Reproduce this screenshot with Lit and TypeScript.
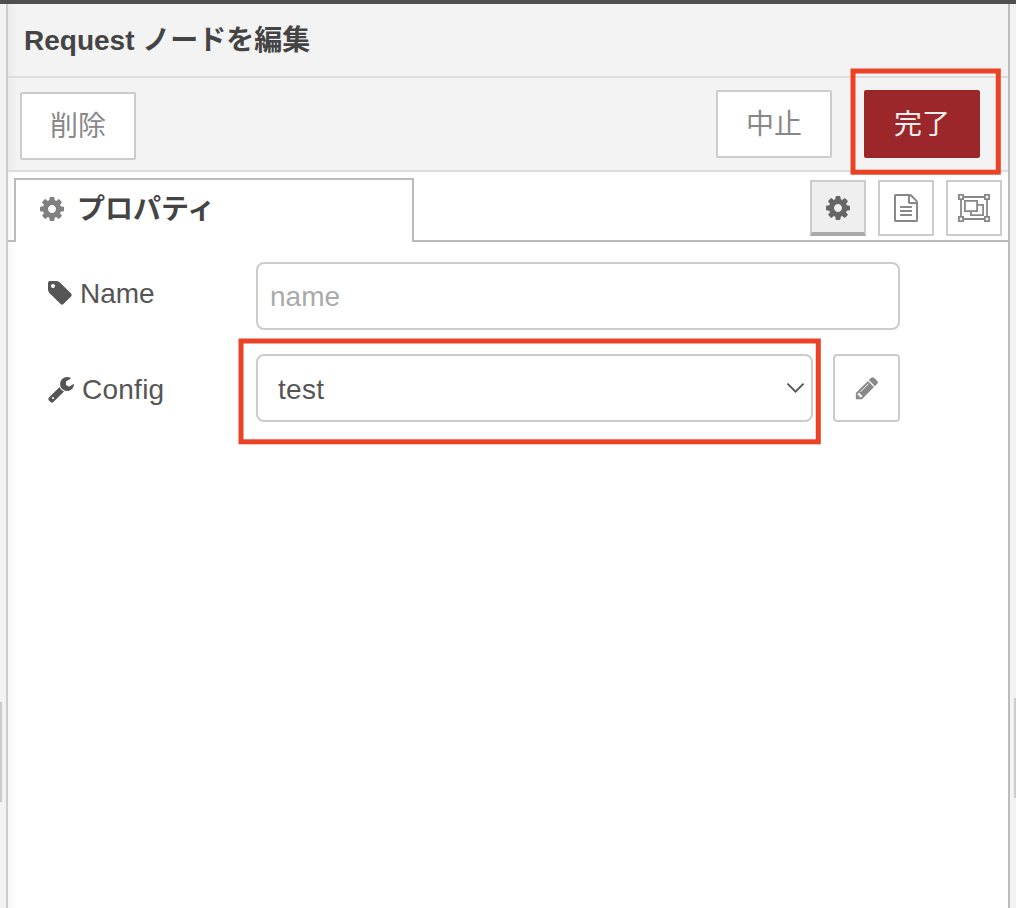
import { LitElement, html, css, svg } from "lit";
import { customElement, property } from "lit/decorators.js";

const ICONS: Record<string, string> = {
  cog: "M1152 896q0-106-75-181t-181-75-181 75-75 181 75 181 181 75 181-75 75-181zm512-109v222q0 12-8 23t-20 13l-185 28q-19 54-39 91 35 50 107 138 10 12 10 25t-9 23q-27 37-99 108t-94 71q-12 0-26-9l-138-108q-44 23-91 38-16 136-29 186-7 28-36 28h-222q-14 0-24.5-8.5t-11.5-21.5l-28-184q-49-16-90-37l-141 107q-10 9-25 9-14 0-25-11-126-114-165-168-7-10-7-23 0-12 8-23 15-21 51-66.5t54-70.5q-27-50-41-99l-183-27q-13-2-21-12.5t-8-23.5v-222q0-12 8-23t19-13l186-28q14-46 39-92-40-57-107-138-10-12-10-24 0-10 9-23 26-36 98.5-107.5t94.5-71.5q13 0 26 10l138 107q44-23 91-38 16-136 29-186 7-28 36-28h222q14 0 24.5 8.5t11.5 21.5l28 184q49 16 90 37l142-107q9-9 24-9 13 0 25 10 129 119 165 170 7 8 7 22 0 12-8 23-15 21-51 66.5t-54 70.5q26 50 41 98l183 28q13 2 21 12.5t8 23.5z",
  tag: "M576 448q0-53-37.5-90.5t-90.5-37.5-90.5 37.5-37.5 90.5 37.5 90.5 90.5 37.5 90.5-37.5 37.5-90.5zm1067 576q0 53-37 90l-491 492q-39 37-91 37-53 0-90-37l-715-716q-38-37-64.5-101t-26.5-117v-416q0-52 38-90t90-38h416q53 0 117 26.5t102 64.5l715 714q37 39 37 91z",
  wrench: "M448 1472q0-26-19-45t-45-19-45 19-19 45 19 45 45 19 45-19 19-45zm644-420l-682 682q-37 37-90 37-52 0-91-37l-106-108q-38-36-38-90 0-53 38-91l681-681q39 98 114.5 173.5t173.5 114.5zm634-435q0 39-23 106-47 134-164.5 217.5t-258.5 83.5q-185 0-316.5-131.5t-131.5-316.5 131.5-316.5 316.5-131.5q58 0 121.5 16.5t107.5 46.5q16 11 16 28t-16 28l-293 169v224l193 107q5-3 79-48.5t135.5-81 70.5-35.5q15 0 23.5 10t8.5 25z",
  pencil: "M491 1536l91-91-235-235-91 91v107h128v128h107zm523-928q0-22-22-22-10 0-17 7l-542 542q-7 7-7 17 0 22 22 22 10 0 17-7l542-542q7-7 7-17zm-54-192l416 416-832 832h-416v-416zm683 96q0 53-37 90l-166 166-416-416 166-165q36-38 90-38 53 0 91 38l235 234q37 39 37 91z",
  file: "M1596 380q28 28 48 76t20 88v1152q0 40-28 68t-68 28h-1344q-40 0-68-28t-28-68v-1600q0-40 28-68t68-28h896q40 0 88 20t76 48zm-444-244v376h376q-10-29-22-41l-313-313q-12-12-41-22zm384 1528v-1024h-416q-40 0-68-28t-28-68v-416h-768v1536h1280zm-1024-864q0-14 9-23t23-9h704q14 0 23 9t9 23v64q0 14-9 23t-23 9h-704q-14 0-23-9t-9-23v-64zm736 224q14 0 23 9t9 23v64q0 14-9 23t-23 9h-704q-14 0-23-9t-9-23v-64q0-14 9-23t23-9h704zm0 256q14 0 23 9t9 23v64q0 14-9 23t-23 9h-704q-14 0-23-9t-9-23v-64q0-14 9-23t23-9h704z",
};

@customElement("ui-icon")
export class UiIcon extends LitElement {
  @property() name = "cog";

  static styles = css`
    :host { display: block; flex: none; width: 28px; height: 28px; }
    svg { display: block; width: 100%; height: 100%; }
  `;

  render() {
    return html`<svg viewBox="0 0 1792 1792" fill="currentColor">${svg`<path d=${ICONS[this.name]}></path>`}</svg>`;
  }
}

@customElement("app-root")
export class AppRoot extends LitElement {
  static styles = css`
    :host {
      display: flex;
      flex-direction: column;
      position: relative;
      box-sizing: border-box;
      width: 1016px;
      height: 908px;
      overflow: hidden;
      background: #f3f3f3;
      color: #444;
      font: 28px/40px "Liberation Sans", "Noto Sans CJK JP", sans-serif;
    }
    * { box-sizing: border-box; }
    .topbar { height: 4px; flex: none; background: #4f4f4f; }
    .body { flex: 1; display: flex; min-height: 0; }
    .gutter { width: 6px; flex: none; display: flex; flex-direction: column; }
    .gutter.left { padding-top: 698px; align-items: flex-start; }
    .gutter.right { padding-top: 694px; align-items: flex-end; }
    .grip { width: 2px; height: 100px; background: #ccc; box-shadow: 0 0 1px #ccc; }
    .panel {
      flex: 1;
      display: flex;
      flex-direction: column;
      background: linear-gradient(90deg, #f7f7f7, #fff 9px);
      border-left: 2px solid #ccc;
      border-right: 2px solid #bbb;
    }
    .title {
      height: 74px;
      padding: 17px 16px 0;
      background: linear-gradient(90deg, #ebebeb, #f3f3f3 9px);
      border-bottom: 2px solid #ddd;
      font-weight: 700;
      white-space: nowrap;
    }
    .toolbar {
      height: 94px;
      display: flex;
      align-items: flex-start;
      padding: 12px 28px 0 12px;
      background: linear-gradient(90deg, #ebebeb, #f3f3f3 9px);
      border-bottom: 2px solid #ddd;
    }
    .btn {
      width: 116px;
      height: 68px;
      padding: 2px 0 0;
      font: inherit;
      color: #888;
      background: #fff;
      border: 2px solid #ccc;
      border-radius: 2px;
    }
    .delete { margin-top: 2px; }
    .cancel { margin-left: auto; margin-right: 32px; }
    .done { color: #eee; background: #9c272b; border-color: #9c272b; }
    .tabs { height: 70px; display: flex; padding-top: 6px; }
    .edge { width: 6px; border-bottom: 2px solid #bbb; }
    .tab {
      width: 400px;
      display: flex;
      padding: 10px 0 0 22px;
      border: 2px solid #bbb;
      border-bottom: 0;
      font-weight: 700;
      color: #444;
      background: #fff;
    }
    .tab ui-icon { color: #808080; margin: 5px 11px 0 0; }
    .tools {
      flex: 1;
      display: flex;
      justify-content: flex-end;
      gap: 12px;
      padding: 2px 6px 0 0;
      border-bottom: 2px solid #bbb;
    }
    .tool {
      width: 56px;
      height: 56px;
      display: flex;
      align-items: center;
      justify-content: center;
      padding: 0;
      color: #888;
      background: #fff;
      border: 2px solid #ccc;
    }
    .tool.on {
      color: #666;
      background: #efefef;
      border-bottom: 4px solid #aaa;
      padding-top: 2px;
    }
    .group { display: block; width: 32px; height: 28px; }
    .form {
      display: grid;
      grid-template-columns: 208px 644px;
      row-gap: 24px;
      padding: 20px 0 0 40px;
      color: #555;
    }
    .label { display: flex; align-items: flex-start; padding-top: 12px; }
    .label ui-icon { margin: 5px 6px 0 -2px; }
    .label.config ui-icon { margin: 9px 7px 0 -1px; }
    .label.config span { margin-top: 4px; letter-spacing: 0.25px; }
    .label span { margin-top: 0; }
    .input, .select {
      height: 68px;
      border: 2px solid #ccc;
      border-radius: 8px;
      background: #fff;
      font: inherit;
    }
    .input { width: 644px; padding: 2px 12px 0; color: #555; outline: none; }
    .input::placeholder { color: #aaa; opacity: 1; }
    .row { display: flex; gap: 20px; }
    .select {
      flex: 1;
      display: flex;
      align-items: center;
      justify-content: space-between;
      padding: 0 6px 0 20px;
    }
    .value { margin-top: 4px; letter-spacing: 0.3px; }
    .chevron { width: 19px; height: 12px; fill: none; stroke: #555; stroke-width: 1.9; }
    .edit {
      width: 67px;
      height: 68px;
      flex: none;
      display: flex;
      align-items: center;
      justify-content: center;
      padding: 0;
      background: #fff;
      border: 2px solid #ccc;
      border-radius: 4px;
      color: #888;
    }
    .edit ui-icon { width: 26px; height: 26px; }
    .marks {
      position: absolute;
      inset: 0;
      width: 1016px;
      height: 908px;
      pointer-events: none;
      fill: none;
      stroke: #eb4226;
      stroke-width: 5;
    }
  `;

  render() {
    return html`
      <div class="topbar"></div>
      <div class="body">
        <div class="gutter left"><div class="grip"></div></div>
        <main class="panel">
          <header class="title">Request ノードを編集</header>
          <div class="toolbar">
            <button class="btn delete">削除</button>
            <button class="btn cancel">中止</button>
            <button class="btn done">完了</button>
          </div>
          <nav class="tabs">
            <div class="edge"></div>
            <div class="tab"><ui-icon name="cog"></ui-icon><span>プロパティ</span></div>
            <div class="tools">
              <button class="tool on"><ui-icon name="cog"></ui-icon></button>
              <button class="tool"><ui-icon name="file"></ui-icon></button>
              <button class="tool">
                <svg class="group" viewBox="0 0 32 28" fill="none" stroke="currentColor" stroke-width="1.8">
                  <path d="M6 3H26M6 25H26M3 6V22M29 6V22"></path>
                  <path d="M.9 .9H5.1V5.1H.9ZM26.9 .9H31.1V5.1H26.9ZM.9 22.9H5.1V27.1H.9ZM26.9 22.9H31.1V27.1H26.9Z"></path>
                  <path d="M6.9 6.9H19.1V17.1H6.9ZM19.1 10.9H25.1V21.1H12.9V17.1"></path>
                </svg>
              </button>
            </div>
          </nav>
          <div class="form">
            <div class="label"><ui-icon name="tag"></ui-icon><span>Name</span></div>
            <div class="row"><input class="input" placeholder="name" /></div>
            <div class="label config"><ui-icon name="wrench"></ui-icon><span>Config</span></div>
            <div class="row">
              <div class="select" role="combobox">
                <span class="value">test</span>
                <svg class="chevron" viewBox="0 0 19 12"><path d="M1.5 1.7L9.5 9.7L17.5 1.7"></path></svg>
              </div>
              <button class="edit"><ui-icon name="pencil"></ui-icon></button>
            </div>
          </div>
        </main>
        <div class="gutter right"><div class="grip"></div></div>
      </div>
      <svg class="marks" viewBox="0 0 1016 908">
        <rect x="853" y="71" width="145.3" height="101.2"></rect>
        <rect x="241" y="341" width="577.3" height="100.8"></rect>
      </svg>
    `;
  }
}
